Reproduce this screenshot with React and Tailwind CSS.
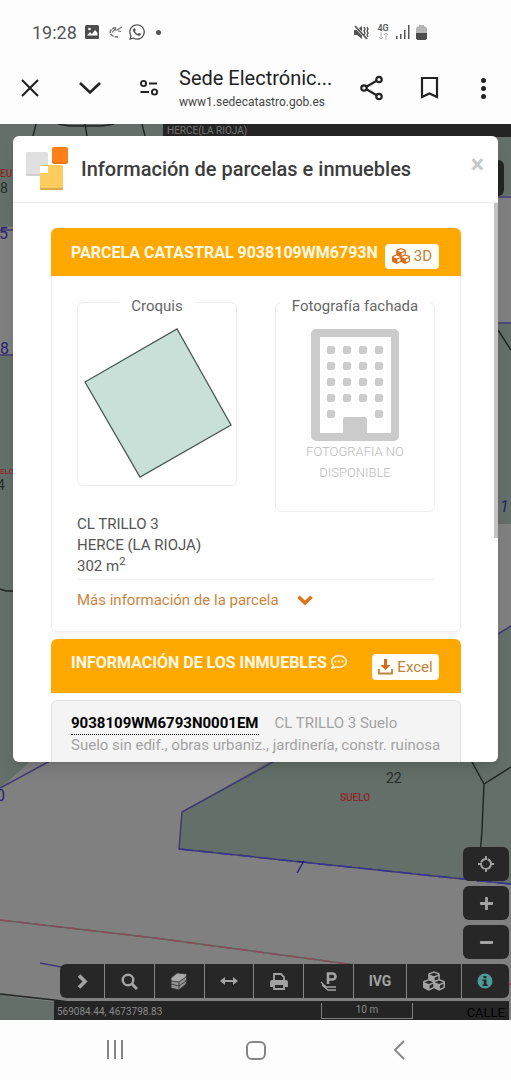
import React, { useState } from 'react';
import { FaCubes, FaWhatsapp, FaRegCommentDots, FaPlus, FaMinus } from 'react-icons/fa';

const mapButton = 'flex items-center justify-center bg-[#272727] text-[#a3a3a3]';

function App() {
  const [open, setOpen] = useState(true);

  return (
    <div className="flex min-h-screen flex-col bg-[#fdfdfd] font-['Roboto',sans-serif] text-[#444] antialiased">
      <StatusBar />
      <BrowserBar />

      <main className="relative flex-1 overflow-hidden bg-[#808080]">
        <MapCanvas />
        <div className="absolute top-0 right-0 left-[163px] h-[13px] bg-[#242424] pl-1 text-[10px] leading-[13px] text-[#777]">
          HERCE(LA RIOJA)
        </div>
        <div className="absolute top-9 right-[7px] h-9 w-10 rounded-md bg-[#242424]" />
        <MapControls />
        {open && <ParcelDialog onClose={() => setOpen(false)} />}
      </main>

      <nav className="flex h-[60px] shrink-0 items-center justify-around px-11 text-[#858585]">
        <button aria-label="Recientes" className="flex h-5 w-14 justify-center gap-[5px]">
          <span className="h-[19px] w-[2px] bg-[#858585]" />
          <span className="h-[19px] w-[2px] bg-[#858585]" />
          <span className="h-[19px] w-[2px] bg-[#858585]" />
        </button>
        <button aria-label="Inicio" className="flex w-14 justify-center">
          <span className="h-[19px] w-5 rounded-md border-2 border-[#858585]" />
        </button>
        <button aria-label="Atrás" className="flex w-14 justify-center pl-1">
          <svg width="12" height="20" viewBox="0 0 12 20" fill="none" stroke="currentColor" strokeWidth="1.8">
            <path d="M11 1 2 10l9 9" />
          </svg>
        </button>
      </nav>
    </div>
  );
}

function StatusBar() {
  return (
    <header className="flex h-16 shrink-0 items-center justify-between pr-[84px] pl-8 text-[#555]">
      <div className="flex items-center">
        <span className="w-[53px] text-[18px]">19:28</span>
        <svg width="14" height="14" viewBox="0 0 14 14">
          <rect width="14" height="14" rx="1.5" fill="#4d4d4d" />
          <path d="M2 10.500 5 7l2 2 3-4 2.500 3v2.500z" fill="#fff" />
          <circle cx="4.500" cy="4" r="1.300" fill="#fff" />
        </svg>
        <svg className="ml-2.5" width="14" height="13" viewBox="0 0 14 13" fill="none" stroke="#777" strokeWidth="1.5">
          <path d="M7 1.500C3 2 1 4 1.200 6.500S4 11 9 11" strokeDasharray="4 1" />
          <path d="M3 6.500c1-2 3-3 5-2.500L13 1M5 4.500l2-3M9 5l3 .5" strokeWidth="1.200" />
        </svg>
        <FaWhatsapp size={18} className="ml-[5px]" />
        <span className="ml-2.5 h-[5px] w-[5px] rounded-full bg-[#555]" />
      </div>
      <div className="flex items-center">
        <svg width="15" height="15" viewBox="0 0 15 15" fill="#555">
          <path d="M0 5h3l5-4v13L3 10H0z" />
          <path d="M1 1l12 13" stroke="#fff" strokeWidth="2.600" />
          <path d="M1 1l12 13" stroke="#555" strokeWidth="1.800" />
          <path d="M10 2l1 2-1 2 1 2-1 2M13 2l1 2-1 2 1 2-1 2 1 2" fill="none" stroke="#555" strokeWidth="1.400" />
        </svg>
        <div className="ml-2 flex w-3 flex-col items-center">
          <span className="text-[9px] leading-2 font-medium">4G</span>
          <svg width="11" height="8" viewBox="0 0 11 8" fill="none" stroke="#bbb">
            <path d="M3 0v7M1 5l2 2 2-2M8 8V1M6 3l2-2 2 2" />
          </svg>
        </div>
        <svg className="ml-[7px]" width="14" height="14" viewBox="0 0 14 14" fill="#555">
          <path d="M0 11h1.500v3H0zM4 9h1.500v5H4zM8 5h1.500v9H8zM12 0h1.500v14H12z" />
        </svg>
        <svg className="ml-1.5" width="11" height="15" viewBox="0 0 11 15">
          <path d="M3 1.500V0h5v1.500h1.500L11 3v5H0V3l1.500-1.500z" fill="#b5b5b5" />
          <path d="M0 8h11v5.500L9.500 15h-8L0 13.500z" fill="#4d4d4d" />
        </svg>
      </div>
    </header>
  );
}

function BrowserBar() {
  return (
    <header className="flex h-[60px] shrink-0 items-center pr-4 pb-3 pl-5 text-[#222]">
      <button aria-label="Cerrar pestaña" className="w-[58px] shrink-0">
        <svg width="20" height="20" viewBox="0 0 20 20" fill="none" stroke="currentColor" strokeWidth="2.200">
          <path d="M2 2l16 16M18 2 2 18" />
        </svg>
      </button>
      <button aria-label="Minimizar" className="w-[61px] shrink-0">
        <svg width="24" height="16" viewBox="0 0 24 16" fill="none" stroke="currentColor" strokeWidth="2.600">
          <path d="M2 3l10 9.500L22 3" />
        </svg>
      </button>
      <button aria-label="Información del sitio" className="w-10 shrink-0">
        <svg width="20" height="18" viewBox="0 0 20 18" fill="none" stroke="currentColor" strokeWidth="1.900">
          <circle cx="4.500" cy="4.500" r="2.600" />
          <circle cx="15.500" cy="13" r="2.600" />
          <path d="M10 4.500h8M1.500 13h8.500" />
        </svg>
      </button>
      <div className="min-w-0 flex-1">
        <div className="text-[20px] leading-7 whitespace-nowrap">Sede Electrónic...</div>
        <div className="text-[12px] leading-5 whitespace-nowrap text-[#444]">www1.sedecatastro.gob.es</div>
      </div>
      <button aria-label="Compartir" className="ml-3 w-14 shrink-0">
        <svg width="24" height="26" viewBox="0 0 24 26" fill="none" stroke="currentColor" strokeWidth="2.200">
          <path d="M6 12l11-6.500M6 14l11 6.500" />
          <circle cx="4" cy="13" r="2.700" />
          <circle cx="19" cy="4.500" r="2.700" />
          <circle cx="19" cy="21.500" r="2.700" />
        </svg>
      </button>
      <button aria-label="Guardar en favoritos" className="flex w-[55px] shrink-0 justify-start pl-1">
        <svg width="20" height="24" viewBox="0 0 20 24" fill="none" stroke="currentColor" strokeWidth="2.200">
          <path d="M2 2h15v19l-7.500-3.500L2 21z" />
        </svg>
      </button>
      <button aria-label="Más opciones" className="flex w-6 shrink-0 flex-col items-center gap-[3px]">
        <span className="h-[5px] w-[5px] rounded-full bg-[#222]" />
        <span className="h-[5px] w-[5px] rounded-full bg-[#222]" />
        <span className="h-[5px] w-[5px] rounded-full bg-[#222]" />
      </button>
    </header>
  );
}

function ParcelDialog({ onClose }) {
  return (
    <section
      role="dialog"
      aria-labelledby="dialog-title"
      className="relative mx-[13px] mt-3 flex h-[58vh] flex-col overflow-hidden rounded-md bg-[#fefefe] shadow-lg"
    >
      <div className="flex h-[67px] shrink-0 items-center border-b border-[#eee] pr-3.5 pl-[13px]">
        <CatastroLogo />
        <h1 id="dialog-title" className="ml-3 flex-1 text-[20px] font-medium whitespace-nowrap text-[#3c3c3c]">
          Información de parcelas e inmuebles
        </h1>
        <button aria-label="Cerrar" onClick={onClose} className="pb-2 text-[25px] leading-6 font-bold text-[#c8c8c8]">
          ×
        </button>
      </div>

      <div className="flex min-h-0 flex-1 overflow-hidden">
        <div className="flex min-w-0 flex-1 flex-col overflow-hidden pt-[25px] pr-[33px] pl-[38px] text-[15px] leading-[21px]">
          <article className="rounded-md border border-[#eee] shadow-xs">
            <div className="-mx-px -mt-px flex h-12 items-center rounded-t-md bg-[#ffa900] pr-[22px] pl-5">
              <h2 className="min-w-0 flex-1 text-[16px] font-bold whitespace-nowrap text-[#fff8e6]">
                PARCELA CATASTRAL 9038109WM6793N
              </h2>
              <button className="mt-2 flex h-[25px] w-[54px] shrink-0 items-center justify-center gap-1 rounded-sm bg-[#fffdf5] text-[#b98543]">
                <FaCubes size={18} className="text-[#d96b1c]" />
                3D
              </button>
            </div>

            <div className="flex items-start justify-between px-[25px] pt-3">
              <Figure title="Croquis">
                <svg width="158" height="168" viewBox="78 317 158 168">
                  <path d="M85 382l92-53 54 96-91 52z" fill="#c8e0d8" stroke="#4b5a55" strokeWidth="1.300" />
                </svg>
              </Figure>
              <Figure title="Fotografía fachada">
                <div className="flex h-[194px] flex-col items-center pt-3">
                  <Building />
                  <p className="text-center text-[13px] font-light text-[#bbb]">
                    FOTOGRAFIA NO
                    <br />
                    DISPONIBLE
                  </p>
                </div>
              </Figure>
            </div>

            <div className="px-[25px] pt-[2px] pb-5">
              <address className="pb-0.5 text-[#555] not-italic">
                CL TRILLO 3
                <br />
                HERCE (LA RIOJA)
                <br />
                302 m<sup>2</sup>
              </address>
              <a href="#mas" className="flex items-center gap-[18px] border-t border-[#f3f3f3] pt-2.5 text-[#cd853f]">
                Más información de la parcela
                <svg width="16" height="11" viewBox="0 0 16 11" fill="none" stroke="#e0761a" strokeWidth="3.600">
                  <path d="M1.500 1.800 8 8l6.500-6.200" />
                </svg>
              </a>
            </div>
          </article>

          <div className="mt-[7px] flex h-[54px] shrink-0 items-center rounded-t-md bg-[#ffa900] pr-[22px] pl-5">
            <h2 className="flex flex-1 items-center gap-1 pb-2 text-[16px] font-bold whitespace-nowrap text-[#fff8e6]">
              INFORMACIÓN DE LOS INMUEBLES
              <FaRegCommentDots size={16} />
            </h2>
            <button className="mt-0.5 flex h-[26px] w-[67px] items-center justify-center gap-1 rounded-sm bg-[#fffdf5] text-[#b98543]">
              <svg width="15" height="16" viewBox="0 0 15 16">
                <path d="M6 0h3v6h3.500L7.500 11 2.500 6H6z" fill="#d96b1c" />
                <path d="M1 10v4.500h13V10" fill="none" stroke="#b98543" strokeWidth="1.800" />
              </svg>
              Excel
            </button>
          </div>

          <article className="mt-[7px] flex-1 rounded-t-md border border-b-0 border-[#e2e2e2] bg-[#f4f4f4] px-[19px] pt-3 text-[#a3a3a3]">
            <div className="flex gap-4 whitespace-nowrap">
              <a href="#inmueble" className="border-b border-dotted border-black font-bold text-black">
                9038109WM6793N0001EM
              </a>
              <span>CL TRILLO 3 Suelo</span>
            </div>
            <p className="whitespace-nowrap">Suelo sin edif., obras urbaniz., jardinería, constr. ruinosa</p>
          </article>
        </div>
        <div className="h-[335px] w-1 shrink-0 bg-[#c2c2c2]" />
      </div>
    </section>
  );
}

function Figure({ title, children }) {
  return (
    <fieldset className="w-40 rounded-md border border-[#eee]">
      <legend className="mx-auto px-3 pt-2 text-[#666]">{title}</legend>
      {children}
    </fieldset>
  );
}

function CatastroLogo() {
  return (
    <svg width="43" height="44" viewBox="0 0 43 44" className="shrink-0">
      <rect y="6" width="22" height="23" rx="1.500" fill="#cfcfcf" />
      <rect y="5" width="22" height="22" rx="1.500" fill="#e0e0e0" />
      <rect x="14" y="20" width="23" height="23" rx="1.500" fill="#d9a94f" />
      <rect x="14" y="18" width="23" height="23" rx="1.500" fill="#fccd5c" />
      <rect x="14" y="19" width="8" height="7" fill="#fefefe" />
      <rect x="26" y="1" width="16" height="16" rx="2" fill="#e77817" />
      <rect x="26" width="16" height="15" rx="2" fill="#ff7f18" />
    </svg>
  );
}

function Building() {
  const rows = [0, 1, 2, 3, 4];
  const cols = [0, 1, 2, 3];
  return (
    <svg width="88" height="112" viewBox="0 0 88 112" className="shrink-0" fill="#cbcbcb">
      <rect width="88" height="112" rx="5" />
      <rect x="9" y="8" width="71" height="96" fill="#fefefe" />
      {rows.map((r) =>
        cols
          .filter((c) => r < 4 || c === 0 || c === 3)
          .map((c) => <rect key={`${r}-${c}`} x={16 + c * 16} y={17 + r * 16} width="8" height="8" rx="2" />)
      )}
      <path d="M32 106V90q0-2 2-2h20q2 0 2 2v16z" />
    </svg>
  );
}

// Cadastral base map, already dimmed by the dialog backdrop
function MapCanvas() {
  return (
    <svg
      className="absolute inset-0 h-full w-full"
      viewBox="0 124 511 896"
      preserveAspectRatio="xMidYMid slice"
      fontFamily="Roboto, sans-serif"
    >
      <rect y="124" width="511" height="896" fill="#808080" />
      <g fill="#646f69">
        <path d="M0 124h511v71l-15 2-200 30H0z" />
        <path d="M0 355h70v370L0 789z" />
        <path d="M495 324h16v200h-16z" />
        <path d="M182 812l90-52 130-60 109-74v258l-332-35z" />
        <path d="M0 995l54 7v18H0z" />
      </g>
      <g fill="none" stroke="#1f2423" strokeWidth="1.400">
        <path d="M36 124l-3 12M85 124l2 12M142 124l3 12M58 124l12 2h32l12-2M0 589l6 2h10" />
        <path d="M472 762l12 22 27-17M484 784l-2 46-4 52M498 330l13 20" />
        <path d="M0 994l54 6 156 20" />
      </g>
      <g fill="none" stroke="#3f3a75" strokeWidth="1.500">
        <path d="M0 230h14M0 355h14M0 788l50-27M496 323h15M498 197h13M498 634l13-8" />
        <path d="M275 761l-93 51-3 37 332 35" />
        <path d="M40 963l32 6" />
      </g>
      <path d="M179 849l332 35" stroke="#35358c" strokeWidth="1.500" strokeDasharray="14 6" />
      <path d="M0 920l155 18 193 26 163 20" fill="none" stroke="#665b5f" strokeWidth="1.500" />
      <path d="M0 920l155 18 193 26 163 20" fill="none" stroke="#854f58" strokeWidth="1.500" strokeDasharray="12 5" />
      <g fill="#28246f" fontSize="16">
        <text x="-1" y="239">5</text>
        <text x="0" y="354">8</text>
        <text x="-4" y="801">0</text>
        <text x="295" y="873" fontStyle="italic">7</text>
        <text x="500" y="512" fontStyle="italic">1</text>
      </g>
      <g fill="#8c2727" fontSize="10" fontWeight="500">
        <text x="0" y="177">EU</text>
        <text x="0" y="474" fontSize="8">ELO</text>
        <text x="340" y="801">SUELO</text>
      </g>
      <g fill="#252c2a" fontSize="14">
        <text x="0" y="193">8</text>
        <text x="-3" y="490">4</text>
        <text x="386" y="783">22</text>
      </g>
    </svg>
  );
}

function MapControls() {
  return (
    <div className="absolute right-[2px] bottom-0 left-[54px] flex flex-col items-end">
      <div className="mb-[5px] flex flex-col gap-[5px]">
        <button aria-label="Mi posición" className={`${mapButton} h-[34px] w-[46px] rounded-md`}>
          <svg width="16" height="16" viewBox="0 0 16 16" fill="none" stroke="currentColor" strokeWidth="1.900">
            <circle cx="8" cy="8" r="5" strokeDasharray="5.600 2.250" strokeDashoffset="-1.100" />
            <path d="M8 0v4M8 12v4M0 8h4M12 8h4" />
          </svg>
        </button>
        <button aria-label="Acercar" className={`${mapButton} h-[34px] w-[46px] rounded-md`}>
          <FaPlus size={15} />
        </button>
        <button aria-label="Alejar" className={`${mapButton} h-[34px] w-[46px] rounded-md`}>
          <FaMinus size={15} />
        </button>
      </div>

      <div className="mb-[3px] flex h-[34px] w-full divide-x divide-[#858585] overflow-hidden rounded-md pl-[6px]">
        <button aria-label="Desplegar" className={`${mapButton} w-[45px] rounded-l-md`}>
          <svg width="11" height="15" viewBox="0 0 11 15" fill="none" stroke="currentColor" strokeWidth="3.600">
            <path d="M2 1.500 8 7.500l-6 6" />
          </svg>
        </button>
        <button aria-label="Buscar" className={`${mapButton} flex-1`}>
          <svg width="17" height="17" viewBox="0 0 17 17" fill="none" stroke="currentColor" strokeWidth="2.400">
            <circle cx="7" cy="7" r="5.300" />
            <path d="M11 11l5 5" strokeWidth="3" />
          </svg>
        </button>
        <button aria-label="Capas" className={`${mapButton} flex-1`}>
          <svg width="20" height="19" viewBox="0 0 20 19" fill="#929292" stroke="#303030" strokeWidth="0.800">
            <path d="M2 12l6-4 10 0-1 4-7 6-8-2z" />
            <path d="M2 9l6-5 10 1-1 4-7 5-8-2z" />
            <path d="M2 6l6-5 10 1-1 3-7 5-8-1z" fill="#a8a8a8" />
            <path d="M10 10v8" />
          </svg>
        </button>
        <button aria-label="Medir" className={`${mapButton} flex-1`}>
          <svg width="18" height="10" viewBox="0 0 18 10" fill="currentColor">
            <path d="M0 5l5-4v3h8V1l5 4-5 4V6H5v3z" />
          </svg>
        </button>
        <button aria-label="Imprimir" className={`${mapButton} flex-1`}>
          <svg width="18" height="17" viewBox="0 0 18 17" fill="none" stroke="currentColor" strokeWidth="1.800">
            <path d="M4 8V1h7l3 3v4" />
            <path d="M1 13V9q0-1 1-1h14q1 0 1 1v4z" fill="currentColor" />
            <path d="M4 11h10v5H4z" fill="#272727" />
          </svg>
        </button>
        <button aria-label="Coordenadas" className={`${mapButton} flex-1`}>
          <svg width="18" height="19" viewBox="0 0 18 19" fill="none" stroke="currentColor" strokeWidth="2.600">
            <path d="M8 12V1.500h4.500a3 3 0 010 6H8" />
            <path d="M1 10l5 5h10M2 13l6 5h8" strokeWidth="1.300" />
          </svg>
        </button>
        <button className={`${mapButton} w-[53px] text-[14px] font-bold`}>IVG</button>
        <button aria-label="Ver en 3D" className={`${mapButton} w-[55px]`}>
          <FaCubes size={22} />
        </button>
        <button aria-label="Información" className={`${mapButton} w-[47px]`}>
          <svg width="16" height="16" viewBox="0 0 16 16">
            <circle cx="8" cy="8" r="7.500" fill="#4f9b98" />
            <path d="M6.500 3h3v2.300h-3zM5.500 6.500h4v5h1.200V13h-5.200v-1.500h1.200V8H5.500z" fill="#272727" />
          </svg>
        </button>
      </div>

      <div className="flex h-[19px] w-full items-start bg-[#242424] pr-1 pl-[3px] text-[10px] text-[#8a8a8a]">
        <span className="flex-1 leading-[21px]">569084.44, 4673798.83</span>
        <span className="mt-0.5 h-4 w-[92px] border border-t-0 border-[#808080] text-center leading-[13px]">10 m</span>
        <span className="w-[92px] text-right text-[13px] leading-6 text-black">CALLE</span>
      </div>
    </div>
  );
}

export default App;
